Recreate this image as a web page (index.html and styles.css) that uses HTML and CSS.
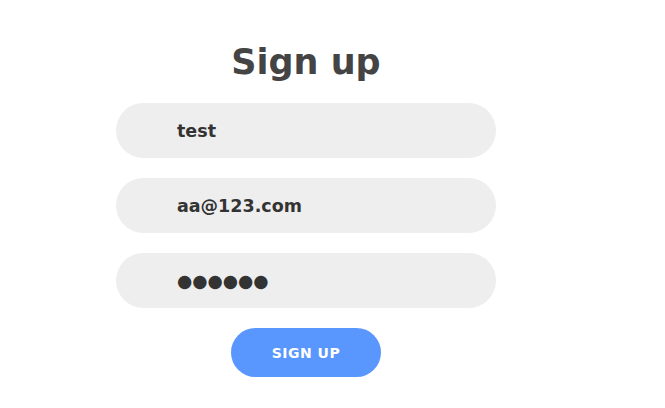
FILE: index.html
```html
<!DOCTYPE html>
<html>
<head>
<meta charset="utf-8">
<link rel="stylesheet" href="styles.css">
</head>
<body>
<div class="page">
  <form class="form">
    <h1 class="title">Sign up</h1>
    <input class="field" type="text" value="test">
    <input class="field" type="email" value="aa@123.com">
    <input class="field" type="text" value="●●●●●●">
    <button class="btn" type="button">SIGN UP</button>
  </form>
</div>
</body>
</html>
```
FILE: styles.css
```css
html, body {
  margin: 0;
  padding: 0;
  background: #fff;
}
.page {
  width: 612px;
  display: flex;
  justify-content: center;
}
.form {
  width: 380px;
  display: flex;
  flex-direction: column;
  align-items: center;
  gap: 20px;
  font-family: "DejaVu Sans", sans-serif;
}
.title {
  margin: 41px 0 0;
  font-size: 35px;
  line-height: 42px;
  font-weight: bold;
  color: #444;
}
.field {
  box-sizing: border-box;
  width: 380px;
  height: 55px;
  border: none;
  outline: none;
  border-radius: 28px;
  background: #eee;
  padding: 0 0 0 61px;
  font-family: "DejaVu Sans", sans-serif;
  font-size: 17.5px;
  font-weight: bold;
  color: #333;
}
.btn {
  width: 150px;
  height: 49px;
  border: none;
  border-radius: 25px;
  background: #5996fd;
  color: #fff;
  font-family: "DejaVu Sans", sans-serif;
  font-size: 14px;
  font-weight: bold;
  letter-spacing: 0.5px;
}
```
